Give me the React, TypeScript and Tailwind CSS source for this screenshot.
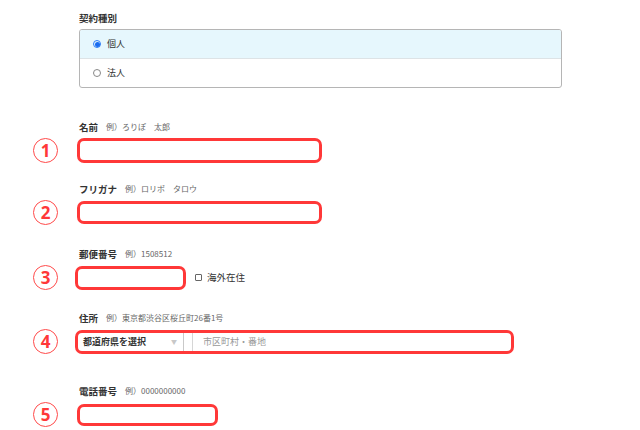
import React from "react";

const RED = "border-[#ff3838]";

function Num({ n }: { n: number }) {
  return (
    <div className="w-[79px] shrink-0 pl-[33px]">
      <div className="w-[25px] h-[25px] rounded-full border-[1.5px] border-[#ff4a4a] flex items-center justify-center text-[#ff3838] text-[17px] font-bold leading-none font-['Open_Sans',sans-serif]">
        {n}
      </div>
    </div>
  );
}

function Label({ title, example }: { title: string; example: string }) {
  return (
    <div className="pl-[79px] h-[12px] flex items-center gap-[8px]">
      <span className="text-[9.5px] font-bold text-[#333]">{title}</span>
      <span className="text-[8px] text-[#666]">{example}</span>
    </div>
  );
}

export default function App() {
  return (
    <div className="w-[640px] h-[430px] bg-white overflow-hidden font-['Noto_Sans_CJK_JP',sans-serif] text-[#333]">
      <div className="pt-[12px]">
        <div className="pl-[79px] h-[12px] flex items-center">
          <span className="text-[9.5px] font-bold">契約種別</span>
        </div>
        <div className="ml-[79px] mt-[5px] w-[483px] h-[59px] border border-[#b5b5b5] rounded-[3px] overflow-hidden flex flex-col">
          <div className="h-[29px] bg-[#e6f7fd] border-b border-[#dde3e6] flex items-center pl-[13px] gap-[6px]">
            <span className="w-[8px] h-[8px] rounded-full border border-[#2d7cf6] flex items-center justify-center">
              <span className="w-[5px] h-[5px] rounded-full bg-[#1a6cf0]" />
            </span>
            <span className="text-[9px]">個人</span>
          </div>
          <div className="flex-1 flex items-center pl-[13px] gap-[6px]">
            <span className="w-[8px] h-[8px] rounded-full border border-[#888]" />
            <span className="text-[9px]">法人</span>
          </div>
        </div>
      </div>

      <div className="mt-[33px]">
        <Label title="名前" example="例）ろりぽ　太郎" />
        <div className="mt-[5px] flex items-center">
          <Num n={1} />
          <div className={`-ml-[2px] w-[245px] h-[25px] border-[3px] ${RED} rounded-[7px]`} />
        </div>
      </div>

      <div className="mt-[20px]">
        <Label title="フリガナ" example="例）ロリポ　タロウ" />
        <div className="mt-[5px] flex items-center">
          <Num n={2} />
          <div className={`-ml-[2px] w-[245px] h-[23px] border-[3px] ${RED} rounded-[7px]`} />
        </div>
      </div>

      <div className="mt-[23px]">
        <Label title="郵便番号" example="例）1508512" />
        <div className="mt-[5px] flex items-center">
          <Num n={3} />
          <div className={`-ml-[4px] w-[111px] h-[24px] border-[3px] ${RED} rounded-[7px]`} />
          <div className="ml-[9px] flex items-center gap-[5px]">
            <span className="w-[7px] h-[7px] border border-[#666] rounded-[1px]" />
            <span className="text-[9.5px]">海外在住</span>
          </div>
        </div>
      </div>

      <div className="mt-[22px]">
        <Label title="住所" example="例）東京都渋谷区桜丘町26番1号" />
        <div className="mt-[5px] flex items-center">
          <Num n={4} />
          <div className={`-ml-[4px] w-[439px] h-[24px] border-[3px] ${RED} rounded-[7px] flex items-center`}>
            <span className="pl-[5px] w-[93px] text-[9px] font-bold text-[#333]">都道府県を選択</span>
            <span className="text-[6px] text-[#c8c8c8]">▼</span>
            <span className="ml-[6px] w-px h-full bg-[#c9c9c9]" />
            <span className="ml-[8px] w-px h-full bg-[#d6d6d6]" />
            <span className="ml-[10px] text-[9px] text-[#999]">市区町村・番地</span>
          </div>
        </div>
      </div>

      <div className="mt-[31px]">
        <Label title="電話番号" example="例）0000000000" />
        <div className="mt-[5px] flex items-center">
          <Num n={5} />
          <div className={`-ml-[2px] w-[141px] h-[22px] border-[3px] ${RED} rounded-[7px]`} />
        </div>
      </div>
    </div>
  );
}
